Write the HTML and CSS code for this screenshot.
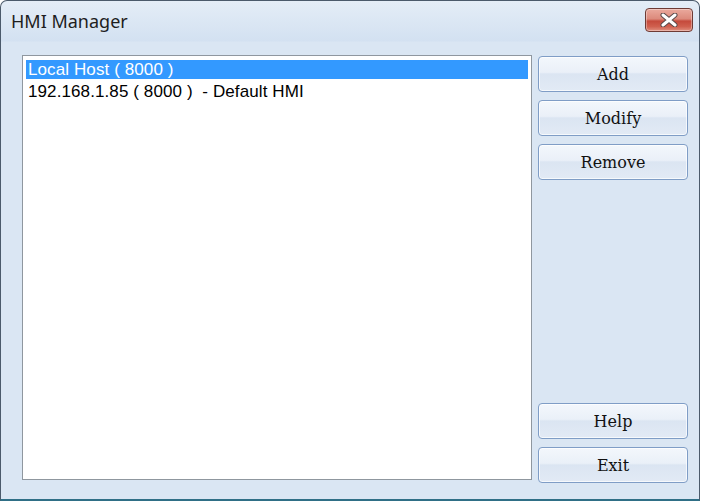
FILE: index.html
```html
<!DOCTYPE html>
<html lang="en">
<head>
    <meta charset="UTF-8">
    <title>HMI Manager</title>
    <link rel="stylesheet" href="styles.css">
</head>
<body>
    <div class="window">
        <div class="titlebar">
            <span class="title">HMI Manager</span>
            <button class="close-btn" title="Close">
                <svg width="20" height="14" viewBox="0 0 20 14">
                    <path d="M4 2 L16 12 M16 2 L4 12" stroke="#5a4a4a" stroke-width="5" stroke-linecap="round"/>
                    <path d="M4 2 L16 12 M16 2 L4 12" stroke="#ffffff" stroke-width="3" stroke-linecap="round"/>
                </svg>
            </button>
        </div>

        <div class="client">
            <div class="host-list">
                <div class="host-item selected">Local Host ( 8000 )</div>
                <div class="host-item">192.168.1.85 ( 8000 )&nbsp; - Default HMI</div>
            </div>

            <div class="actions">
                <div class="action-group">
                    <button class="btn">Add</button>
                    <button class="btn">Modify</button>
                    <button class="btn">Remove</button>
                </div>
                <div class="action-group">
                    <button class="btn">Help</button>
                    <button class="btn">Exit</button>
                </div>
            </div>
        </div>
    </div>
</body>
</html>
```

FILE: styles.css
```css
body {
    margin: 0;
    background-color: #ffffff;
}
.window {
    width: 698px;
    height: 498px;
    display: flex;
    flex-direction: column;
    border: 1px solid #4b5a6b;
    border-bottom: 2px solid #2f6f86;
    border-radius: 7px 7px 0 0;
    background: linear-gradient(to bottom, #e4edf7 0px, #d3e1f1 40px, #dae6f3 41px, #dae6f3 100%);
    overflow: hidden;
}
.titlebar {
    height: 39px;
    display: flex;
    align-items: flex-start;
    justify-content: space-between;
    padding: 0 6px 0 10px;
}
.title {
    font-family: "Noto Sans", sans-serif;
    font-size: 18px;
    color: #1e1e1e;
    margin-top: 8px;
}
.close-btn {
    width: 48px;
    height: 24px;
    margin-top: 7px;
    padding: 0;
    display: flex;
    align-items: center;
    justify-content: center;
    border: 1px solid #6e3b35;
    border-radius: 4px;
    background: linear-gradient(to bottom, #eaa99d 0%, #dc8a7c 45%, #c54a3c 55%, #d0604f 80%, #e09080 100%);
    box-shadow: inset 0 0 0 1px rgba(255,255,255,0.35);
}
.client {
    flex: 1;
    display: flex;
    gap: 6px;
    padding: 15px 11px 19px 21px;
}
.host-list {
    flex: 1;
    background-color: #ffffff;
    border: 1px solid #8f979f;
    padding: 4px 3px;
    font-family: "Liberation Sans", Arial, sans-serif;
    font-size: 17px;
    letter-spacing: 0.1px;
    color: #000000;
}
.host-item {
    height: 19px;
    line-height: 19px;
    padding-left: 2px;
    margin-bottom: 3px;
    white-space: pre;
}
.host-item.selected {
    background-color: #3399ff;
    color: #ffffff;
}
.actions {
    width: 150px;
    display: flex;
    flex-direction: column;
    justify-content: space-between;
    padding-top: 1px;
    margin-bottom: -3px;
}
.action-group {
    display: flex;
    flex-direction: column;
    gap: 8px;
}
.btn {
    height: 36px;
    width: 150px;
    border: 1px solid #7f9dc6;
    border-radius: 4px;
    background: linear-gradient(to bottom, #f3f7fc 0%, #eaf0f8 45%, #dbe5f2 50%, #e2eaf5 100%);
    box-shadow: inset 0 0 0 1px rgba(255,255,255,0.7);
    font-family: "DejaVu Serif", serif;
    font-size: 16px;
    color: #111111;
    padding: 0;
}
```
